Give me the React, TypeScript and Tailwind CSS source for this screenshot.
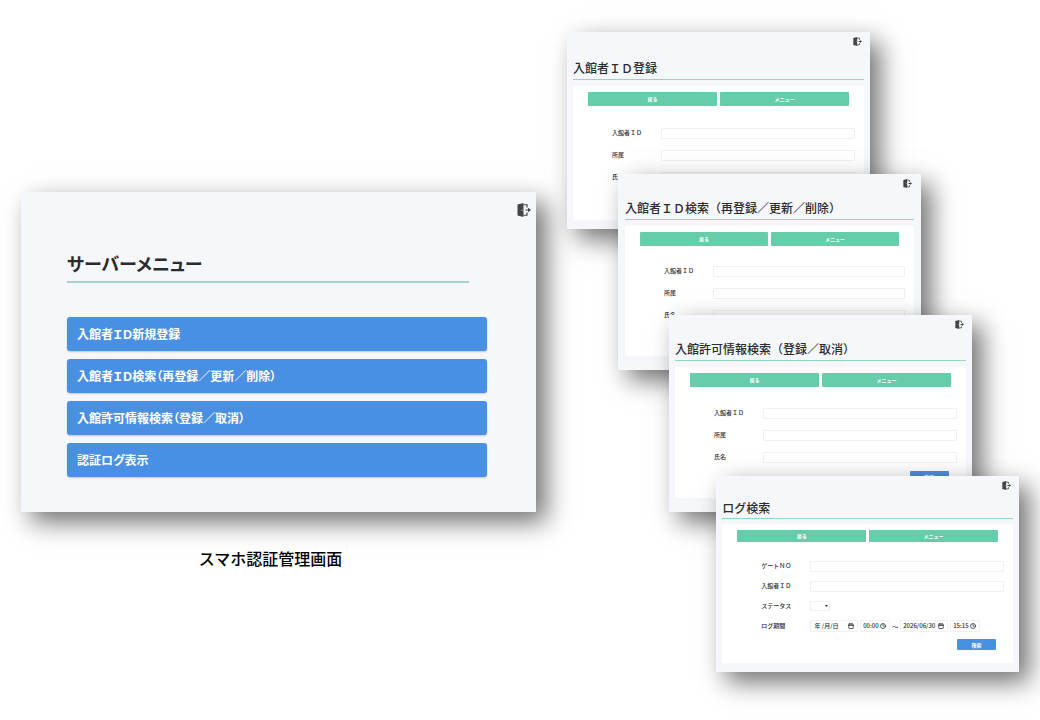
import type { ReactNode } from "react";
import { Calendar, Clock } from "lucide-react";

const menuItems = [
  "入館者ＩＤ新規登録",
  "入館者ＩＤ検索（再登録／更新／削除）",
  "入館許可情報検索（登録／取消）",
  "認証ログ表示",
];

function ExitIcon({ className }: { className: string }) {
  return (
    <svg viewBox="0 0 28 28" className={className} aria-hidden="true">
      <path d="M1 3 L13 0 V28 L1 25 Z" fill="#444" />
      <circle cx="10" cy="14.5" r="1.2" fill="#f5f7fb" />
      <path d="M13 3.5 H20 V9 M20 19 V24.5 H13" fill="none" stroke="#444" strokeWidth="2.4" />
      <path d="M17 12.8 H22 V9.5 L28 14 L22 18.5 V15.2 H17 Z" fill="#444" />
    </svg>
  );
}

function TopActions({ compact }: { compact?: boolean }) {
  return (
    <nav className="flex gap-[3px] px-[15px]">
      {["戻る", "メニュー"].map((label) => (
        <button
          key={label}
          type="button"
          className={`flex-1 rounded-[1px] bg-[#66cdaa] text-[5px] leading-[8px] font-bold text-white ${compact ? "py-[2px]" : "py-[3px]"}`}
        >
          {label}
        </button>
      ))}
    </nav>
  );
}

const fieldBox = "border border-[#f0f0f0] rounded-[1px] bg-white";

function Row({ id, label, tight, children }: { id: string; label: string; tight?: boolean; children?: ReactNode }) {
  return (
    <div className={`flex items-center pr-[9px] pl-[39px] ${tight ? "h-[20px]" : "h-[22px]"}`}>
      <label htmlFor={id} className="w-[49px] shrink-0 text-[6px] leading-[8px] font-medium">
        {label}
      </label>
      {children ?? <input id={id} className={`h-[11px] min-w-0 flex-1 px-1 text-[6px] ${fieldBox}`} />}
    </div>
  );
}

function Picker({ id, label, value, kind }: { id: string; label: string; value: string; kind: "date" | "time" }) {
  const Icon = kind === "date" ? Calendar : Clock;
  return (
    <span className={`flex h-[12px] items-center pr-[3px] pl-[2px] ${fieldBox} ${kind === "date" ? "w-[48px]" : "w-[30px]"}`}>
      <input id={id} aria-label={label} defaultValue={value} className="w-full min-w-0 bg-transparent text-[6px] leading-[8px] font-medium" />
      <Icon className="size-[6px] shrink-0" strokeWidth={3} />
    </span>
  );
}

function SearchButton() {
  return (
    <div className="flex justify-end pr-[17px]">
      <button type="button" className="w-[39px] rounded-[1px] bg-[#4a90e2] text-[5px] leading-[11px] font-bold text-white">
        検索
      </button>
    </div>
  );
}

function Window({
  title,
  className,
  titleClass,
  compact,
  children,
}: {
  title: string;
  className: string;
  titleClass: string;
  compact?: boolean;
  children: ReactNode;
}) {
  return (
    <section className={`relative flex w-[67%] flex-col bg-[#f5f7fb] shadow-[10px_10px_24px_rgba(0,0,0,0.56)] ${className}`}>
      <button type="button" aria-label="ログアウト" className="mt-[5px] mr-[2px] self-end">
        <ExitIcon className="size-[9px]" />
      </button>
      <h2 className={`border-b border-[#8fd6c3] text-[12px] leading-[18px] font-medium whitespace-nowrap ${titleClass}`}>
        {title}
      </h2>
      <div className={`flex-1 rounded-[2px] bg-white ${compact ? "mt-[5px] pt-[6px]" : "mt-[6px] pt-[6px]"}`}>
        <TopActions compact={compact} />
        {children}
      </div>
    </section>
  );
}

function PersonFields({ prefix }: { prefix: string }) {
  return (
    <>
      <Row id={`${prefix}-id`} label="入館者ＩＤ" />
      <Row id={`${prefix}-dept`} label="所属" />
      <Row id={`${prefix}-name`} label="氏名" />
    </>
  );
}

export default function App() {
  return (
    <main className="grid min-h-screen grid-cols-[515fr_452fr] gap-x-[31px] overflow-hidden bg-white px-[21px] pt-[32px] pb-[48px] font-['Noto_Sans_CJK_JP',sans-serif] text-[#2b2b2b]">
      <figure className="mt-[160px]">
        <section className="flex flex-col bg-[#f5f7fb] pr-[49px] pb-[35px] pl-[46px] shadow-[10px_10px_24px_rgba(0,0,0,0.56)]">
          <button type="button" aria-label="ログアウト" className="-mr-[44px] mt-[11px] self-end">
            <ExitIcon className="size-[14px]" />
          </button>
          <h1 className="mt-[31px] mr-[18px] border-b-2 border-[#a6d6cb] pb-[3px] text-[18px] leading-[30px] font-bold [font-feature-settings:'palt']">
            サーバーメニュー
          </h1>
          <ul className="mt-[34px] flex flex-col gap-[8px]">
            {menuItems.map((item) => (
              <li key={item}>
                <button
                  type="button"
                  className="block w-full rounded-[3px] bg-[#4a90e2] px-[10px] py-[8px] text-left text-[12px] leading-[18px] font-bold text-white shadow-[0_1px_2px_rgba(0,0,0,0.2)] [font-feature-settings:'palt']"
                >
                  {item}
                </button>
              </li>
            ))}
          </ul>
        </section>
        <figcaption className="mt-[34px] pr-[16px] text-center text-[16px] leading-[24px] font-medium text-black">
          スマホ認証管理画面
        </figcaption>
      </figure>

      <div className="flex flex-col">
        <Window title="入館者ＩＤ登録" className="h-[197px] px-[6px] pb-[9px]" titleClass="mt-[13px] pb-[2px]">
          <div className="pt-[16px]">
            <PersonFields prefix="register" />
          </div>
        </Window>
        <Window
          title="入館者ＩＤ検索（再登録／更新／削除）"
          className="-mt-[55px] ml-[51px] h-[196px] px-[7px] pb-[14px]"
          titleClass="mt-[11px] pb-[2px]"
        >
          <div className="pt-[14px]">
            <PersonFields prefix="search" />
          </div>
        </Window>
        <Window
          title="入館許可情報検索（登録／取消）"
          className="-mt-[55px] ml-[102px] h-[197px] px-[6px] pb-[14px]"
          titleClass="mt-[11px] pb-[2px]"
        >
          <div className="pt-[15px]">
            <PersonFields prefix="permit" />
          </div>
          <div className="pt-[3px]">
            <SearchButton />
          </div>
        </Window>
        <Window title="ログ検索" compact className="-mt-[36px] h-[196px] self-end px-[6px] pb-[9px]" titleClass="mt-[9px] pb-[1px]">
          <div className="pt-[14px]">
            <Row id="gate" label="ゲートＮＯ" tight />
            <Row id="log-id" label="入館者ＩＤ" tight />
            <Row id="status" label="ステータス" tight>
              <span className="relative flex items-center">
                <select id="status" className={`h-[10px] w-[20px] appearance-none text-[6px] ${fieldBox}`}>
                  <option value=""></option>
                </select>
                <svg viewBox="0 0 6 4" className="pointer-events-none absolute right-[2px] h-[2px] w-[3px]" aria-hidden="true">
                  <path d="M0 0 H6 L3 4 Z" fill="#333" />
                </svg>
              </span>
            </Row>
            <Row id="from-date" label="ログ期間" tight>
              <div className="flex items-center gap-[2px] text-[6px]">
                <Picker id="from-date" label="開始日" value=" 年 /月/日" kind="date" />
                <Picker id="from-time" label="開始時刻" value="00:00" kind="time" />
                <span>～</span>
                <Picker id="to-date" label="終了日" value="2026/06/30" kind="date" />
                <Picker id="to-time" label="終了時刻" value="15:15" kind="time" />
              </div>
            </Row>
          </div>
          <div className="pt-[3px]">
            <SearchButton />
          </div>
        </Window>
      </div>
    </main>
  );
}
